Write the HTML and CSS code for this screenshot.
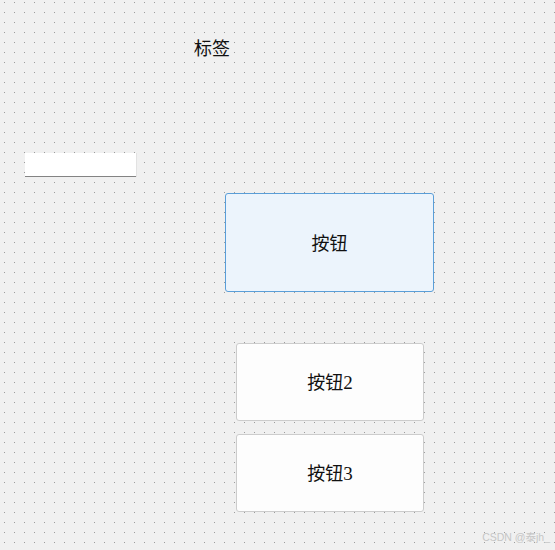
FILE: index.html
```html
<!DOCTYPE html>
<html>
<head>
    <meta charset="UTF-8">
    <title>Form</title>
    <link rel="stylesheet" href="styles.css">
</head>
<body>
    <div class="form-canvas">
        <div class="label">标签</div>
        <div class="line-edit"></div>
        <button class="push-btn push-btn-focus">按钮</button>
        <button class="push-btn push-btn-small first">按钮<span class="num">2</span></button>
        <button class="push-btn push-btn-small">按钮<span class="num">3</span></button>
    </div>
    <div class="watermark">CSDN @泰jh_</div>
</body>
</html>
```

FILE: styles.css
```css
html, body {
    margin: 0;
    padding: 0;
}

body {
    width: 555px;
    height: 550px;
    position: relative;
    overflow: hidden;
    font-family: "Noto Sans CJK SC", sans-serif;
    color: #111;
    background-color: #f0f0f0;
    /* designer grid: 1px dots every 10px */
    background-image:
        linear-gradient(to bottom, transparent 1px, #f0f0f0 1px),
        linear-gradient(to right, #9c9c9c 1px, #f0f0f0 1px);
    background-size: 10px 10px, 10px 10px;
    background-position: 4px 2px, 4px 2px;
}

.form-canvas {
    display: flex;
    flex-direction: column;
    align-items: flex-start;
    padding-top: 35px;
}

.label {
    margin-left: 194px;
    font-size: 18px;
    line-height: 24px;
    height: 24px;
}

.line-edit {
    margin-left: 25px;
    margin-top: 94px;
    width: 111px;
    height: 23px;
    background-color: #fff;
    border-bottom: 1px solid #838383;
    box-shadow: 1px 0 0 #e2e2e2;
}

.push-btn {
    margin: 0;
    padding: 0 0 2px;
    font-family: inherit;
    font-size: 18px;
    color: #111;
    border-radius: 3px;
    box-sizing: border-box;
    cursor: default;
}

.num {
    font-family: "Liberation Serif", serif;
    font-size: 19px;
}

.push-btn-focus {
    margin-left: 225px;
    margin-top: 16px;
    width: 209px;
    height: 99px;
    background-color: #ecf4fc;
    border: 1px solid #5a9ed8;
}

.push-btn-small {
    margin-left: 236px;
    margin-top: 13px;
    width: 188px;
    height: 78px;
    background-color: #fdfdfd;
    border: 1px solid #cccccc;
}

.push-btn-small.first {
    margin-top: 51px;
}

.watermark {
    position: absolute;
    right: 5px;
    bottom: 6px;
    font-family: "Liberation Sans", "Noto Sans CJK SC", sans-serif;
    font-size: 10.5px;
    color: #c6c6c6;
}
```
